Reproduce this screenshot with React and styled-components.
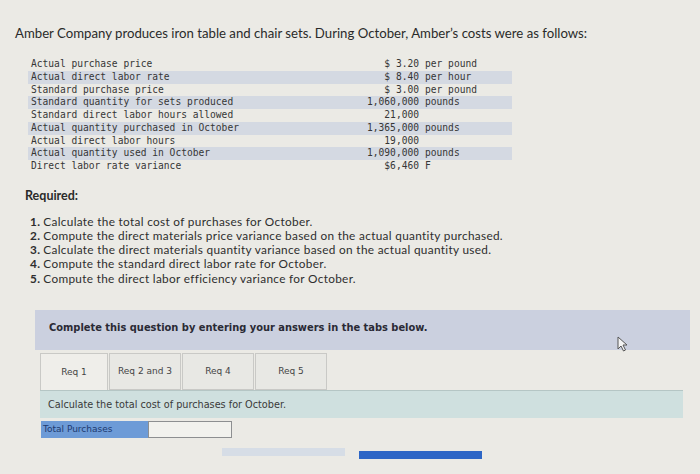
import React from "react";
import styled, { createGlobalStyle } from "styled-components";

const Global = createGlobalStyle`
  html, body { margin: 0; padding: 0; }
  body {
    width: 700px;
    height: 474px;
    overflow: hidden;
    background: #ebeae5;
    font-family: Lato, "Open Sans", sans-serif;
    color: #2b2b2b;
  }
`;

const Page = styled.div`
  position: relative;
  width: 700px;
  height: 474px;
  padding-top: 25px;
  box-sizing: border-box;
`;

const Title = styled.p`
  margin: 0 0 0 15px;
  font-size: 13.2px;
  line-height: 16px;
  color: #2a2a2a;
`;

const Table = styled.div`
  margin: 17px 0 0 28px;
  width: 484px;
  display: grid;
  grid-template-columns: 1fr 72px 93px;
  font-family: "DejaVu Sans Mono", "Liberation Mono", monospace;
  font-size: 9.6px;
  color: #363636;
`;

const Cell = styled.div`
  height: 12.75px;
  line-height: 12.75px;
  white-space: nowrap;
  background: ${(p) => (p.$shade ? "#d4d9e2" : "transparent")};
  text-align: ${(p) => (p.$right ? "right" : "left")};
  padding-left: ${(p) => p.$pad || 0}px;
`;

const Required = styled.h4`
  margin: 15px 0 0 25px;
  font-size: 12.5px;
  line-height: 15px;
  font-weight: 700;
  color: #2a2a2a;
`;

const List = styled.ol`
  list-style: none;
  margin: 12px 0 0 30px;
  padding: 0;
  font-size: 11.8px;
  line-height: 14.2px;
  letter-spacing: 0.32px;
  color: #2e2e2e;
`;

const Num = styled.b`
  font-weight: 700;
  margin-right: 3px;
`;

const Banner = styled.div`
  margin: 24px 10px 0 35px;
  height: 40px;
  box-sizing: border-box;
  padding: 11px 14px;
  background: #cbd0df;
  font-family: "DejaVu Sans", Verdana, sans-serif;
  font-weight: 700;
  font-size: 9.9px;
  line-height: 14px;
  color: #2a2a35;
`;

const Tabs = styled.div`
  display: flex;
  margin: 3px 0 0 40px;
  height: 37px;
`;

const Tab = styled.div`
  width: ${(p) => p.$w}px;
  box-sizing: border-box;
  display: flex;
  align-items: center;
  justify-content: center;
  border: 1px solid #c9c9c6;
  border-bottom: ${(p) => (p.$active ? "none" : "1px solid #c9c9c6")};
  background: ${(p) => (p.$active ? "#efeeea" : "#e8e8e4")};
  font-family: "DejaVu Sans", Verdana, sans-serif;
  font-size: 9px;
  color: #444;
  & + & { margin-left: 1px; }
`;

const Panel = styled.div`
  margin: 0 17px 0 40px;
  height: 28px;
  box-sizing: border-box;
  padding: 0 8px;
  display: flex;
  align-items: center;
  background: #cfe0df;
  border-top: 1px solid #b5c6c5;
  font-family: "DejaVu Sans", Verdana, sans-serif;
  font-size: 9.7px;
  color: #3a3a3a;
`;

const AnswerRow = styled.div`
  display: flex;
  margin: 3px 0 0 41px;
  height: 17px;
`;

const AnswerLabel = styled.div`
  width: 107px;
  box-sizing: border-box;
  padding-left: 2px;
  display: flex;
  align-items: center;
  background: #6d9bd7;
  font-family: "DejaVu Sans", Verdana, sans-serif;
  font-size: 9px;
  color: #1d3a70;
`;

const AnswerInput = styled.div`
  width: 84px;
  box-sizing: border-box;
  border: 1px solid #8d8f91;
  background: #f2f2ee;
`;

const NavRow = styled.div`
  display: flex;
  align-items: flex-start;
  gap: 14px;
  margin: 10px 0 0 222px;
`;

const NavBar = styled.div`
  width: 123px;
  height: 8px;
  margin-top: ${(p) => p.$top || 0}px;
  background: ${(p) => p.$color};
`;

const Cursor = styled.svg`
  position: absolute;
  left: 617px;
  top: 336px;
`;

const rows = [
  ["Actual purchase price", "$ 3.20", "per pound"],
  ["Actual direct labor rate", "$ 8.40", "per hour"],
  ["Standard purchase price", "$ 3.00", "per pound"],
  ["Standard quantity for sets produced", "1,060,000", "pounds"],
  ["Standard direct labor hours allowed", "21,000", ""],
  ["Actual quantity purchased in October", "1,365,000", "pounds"],
  ["Actual direct labor hours", "19,000", ""],
  ["Actual quantity used in October", "1,090,000", "pounds"],
  ["Direct labor rate variance", "$6,460", "F"],
];

const reqs = [
  "Calculate the total cost of purchases for October.",
  "Compute the direct materials price variance based on the actual quantity purchased.",
  "Calculate the direct materials quantity variance based on the actual quantity used.",
  "Compute the standard direct labor rate for October.",
  "Compute the direct labor efficiency variance for October.",
];

const tabs = [
  ["Req 1", 68],
  ["Req 2 and 3", 72],
  ["Req 4", 72],
  ["Req 5", 72],
];

export default function App() {
  return (
    <Page>
      <Global />
      <Title>
        Amber Company produces iron table and chair sets. During October, Amber’s costs were as follows:
      </Title>
      <Table>
        {rows.map(([label, value, unit], i) => {
          const shade = i % 2 === 1;
          return (
            <React.Fragment key={label}>
              <Cell $shade={shade} $pad={3}>{label}</Cell>
              <Cell $shade={shade} $right>{value}</Cell>
              <Cell $shade={shade} $pad={6}>{unit}</Cell>
            </React.Fragment>
          );
        })}
      </Table>
      <Required>Required:</Required>
      <List>
        {reqs.map((r, i) => (
          <li key={i}>
            <Num>{i + 1}.</Num>
            {r}
          </li>
        ))}
      </List>
      <Banner>Complete this question by entering your answers in the tabs below.</Banner>
      <Tabs>
        {tabs.map(([t, w], i) => (
          <Tab key={t} $w={w} $active={i === 0}>
            {t}
          </Tab>
        ))}
      </Tabs>
      <Panel>Calculate the total cost of purchases for October.</Panel>
      <AnswerRow>
        <AnswerLabel>Total Purchases</AnswerLabel>
        <AnswerInput />
      </AnswerRow>
      <NavRow>
        <NavBar $color="#d6dde6" />
        <NavBar $color="#2d66c6" $top={3} />
      </NavRow>
      <Cursor width="12" height="16" viewBox="0 0 12 16">
        <path d="M1 1 L1 13 L4 10 L6.5 15 L8.5 14 L6 9 L10 9 Z" fill="#f4f4f4" stroke="#555" strokeWidth="1" strokeLinejoin="round" />
      </Cursor>
    </Page>
  );
}
